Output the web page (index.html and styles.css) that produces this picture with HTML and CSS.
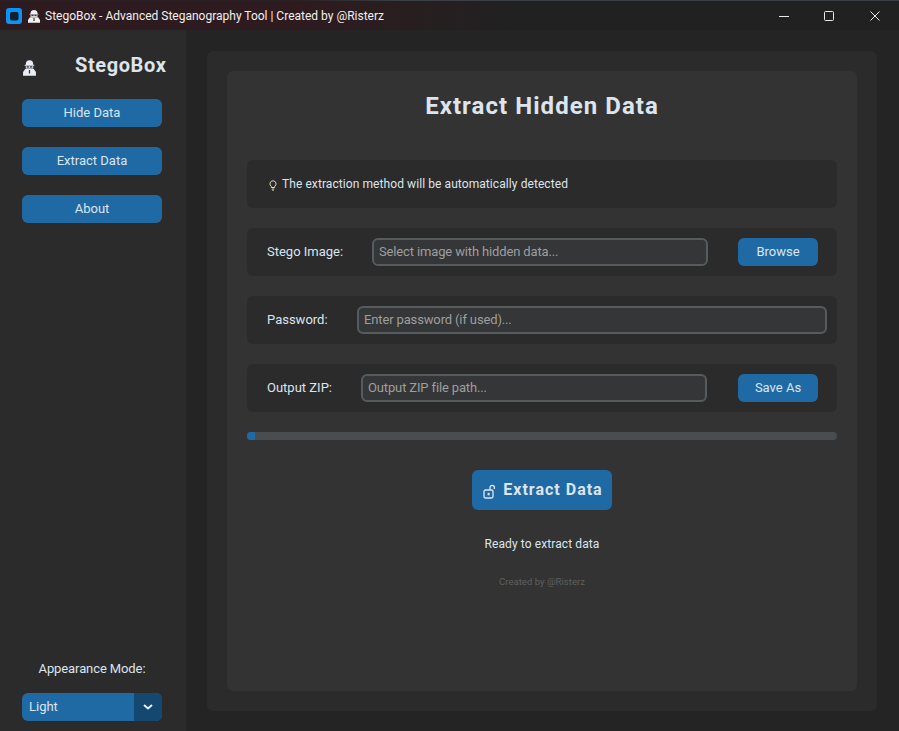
FILE: index.html
```html
<!DOCTYPE html>
<html lang="en">
<head>
<meta charset="utf-8">
<title>StegoBox</title>
<link rel="stylesheet" href="styles.css">
</head>
<body>
<div class="window">
  <header class="titlebar">
    <svg class="app-icon" width="16" height="16" viewBox="0 0 16 16"><rect width="16" height="16" rx="3" fill="#0b93f6"/><rect x="4" y="4" width="8.500" height="8.500" rx="2" fill="#10202c"/></svg>
    <svg class="spy" width="14" height="14" viewBox="0 0 14 14"><path d="M3.500 4.500Q3.500 1 7 1T10.500 4.500L12 5.500H2Z" fill="#eef0f2"/><path d="M3.500 5.800h7V8h-7z" fill="#d4d4d4"/><path d="M3 8.200h8l2 2.600v3H1v-3z" fill="#eef0f2"/><path d="M4.500 6h2v1h-2zM7.500 6h2v1h-2zM6.400 9h1.200v3H6.400z" fill="#3a3538"/></svg>
    <span class="title-text">StegoBox - Advanced Steganography Tool | Created by @Risterz</span>
    <div class="win-controls">
      <svg width="10" height="10" viewBox="0 0 10 10"><path d="M0 5.500h10" stroke="#e8e8e8" fill="none"/></svg>
      <svg width="11" height="10" viewBox="0 0 11 10"><rect x=".5" y=".5" width="9" height="9" rx="1" stroke="#e8e8e8" fill="none"/></svg>
      <svg width="10" height="10" viewBox="0 0 10 10"><path d="M.5.500l9 9M9.500.500l-9 9" stroke="#e8e8e8" fill="none"/></svg>
    </div>
  </header>
  <div class="app">
    <aside class="sidebar">
      <div class="brand">
        <svg class="spy-logo" width="15" height="17" viewBox="0 0 14 14" preserveAspectRatio="none"><path d="M3.500 4.500Q3.500 1 7 1T10.500 4.500L12 5.500H2Z" fill="#e8eef5"/><path d="M3.500 5.800h7V8h-7z" fill="#ccd4dc"/><path d="M3 8.200h8l2 2.600v3H1v-3z" fill="#e8eef5"/><path d="M4.500 6h2v1h-2zM7.500 6h2v1h-2zM6.400 9h1.200v3H6.400z" fill="#3a3538"/></svg>
        <span class="brand-name">StegoBox</span>
      </div>
      <nav class="nav">
        <button class="btn nav-btn">Hide Data</button>
        <button class="btn nav-btn">Extract Data</button>
        <button class="btn nav-btn">About</button>
      </nav>
      <div class="appearance">
        <div class="appearance-label">Appearance Mode:</div>
        <div class="select">
          <span class="select-value">Light</span>
          <span class="select-arrow"><svg width="10" height="6" viewBox="0 0 10 6"><path d="M1 1l4 3.500L9 1" stroke="#e6eef5" stroke-width="2" fill="none"/></svg></span>
        </div>
      </div>
    </aside>
    <main class="main">
      <div class="outer">
        <section class="card">
          <h1 class="heading">Extract Hidden Data</h1>
          <div class="row info">
            <svg class="bulb" width="8" height="11" viewBox="0 0 8 11"><path d="M4 .800a3 3 0 0 0-1.700 5.500V7.500h3.400V6.300A3 3 0 0 0 4 .800zM2.800 9h2.400M3.300 10.300h1.400" stroke="#e3d9b8" fill="none"/></svg>
            <span>The extraction method will be automatically detected</span>
          </div>
          <div class="row">
            <label class="label label-stego">Stego Image:</label>
            <div class="input input-stego">Select image with hidden data...</div>
            <button class="btn side-btn">Browse</button>
          </div>
          <div class="row">
            <label class="label label-pass">Password:</label>
            <div class="input input-pass">Enter password (if used)...</div>
          </div>
          <div class="row">
            <label class="label label-zip">Output ZIP:</label>
            <div class="input input-zip">Output ZIP file path...</div>
            <button class="btn side-btn">Save As</button>
          </div>
          <div class="progress"><div class="progress-fill"></div></div>
          <button class="btn extract">
            <svg width="14" height="15" viewBox="0 0 14 15"><rect x="1" y="6" width="9" height="8" rx="1.500" stroke="#dbe9f5" stroke-width="1.300" fill="none"/><path d="M7 6V3.500a2.200 2.200 0 0 1 4.400 0V5" stroke="#dbe9f5" stroke-width="1.300" fill="none"/><rect x="4.600" y="8.800" width="2" height="2.500" fill="#dbe9f5"/></svg>
            <span>Extract Data</span>
          </button>
          <p class="status">Ready to extract data</p>
          <p class="credit">Created by @Risterz</p>
        </section>
      </div>
    </main>
  </div>
</div>
</body>
</html>
```
FILE: styles.css
```css
* { box-sizing: border-box; }
html, body { margin: 0; height: 100%; }
body { background: #242424; font-family: Roboto, "Liberation Sans", sans-serif; color: #dce4ee; overflow: hidden; }
.window { width: 899px; height: 731px; display: flex; flex-direction: column; }

.titlebar { height: 30px; flex: none; background: linear-gradient(90deg, #2e1b1f 0, #2e1b1f 300px, #212121 520px); border-top: 1px solid; border-image: linear-gradient(90deg, #2a2024 0, #2a2024 300px, #3a4045 400px) 1; display: flex; align-items: center; padding-left: 6px; }
.app-icon { flex: none; margin-top: 0; }
.spy { flex: none; margin-left: 5px; }
.title-text { margin-left: 4px; font-family: Roboto, "Noto Sans", sans-serif; font-size: 12px; color: #f0f0f0; white-space: nowrap; }
.win-controls { margin-left: auto; display: flex; align-items: center; gap: 35px; padding-right: 19px; }
.win-controls svg { display: block; }

.app { flex: 1; display: flex; min-height: 0; }
.sidebar { width: 186px; flex: none; background: #2b2b2b; display: flex; flex-direction: column; padding: 0 24px 10px 22px; }
.brand { height: 69px; display: flex; align-items: center; position: relative; }
.spy-logo { margin-left: 0; margin-top: 6px; flex: none; }
.brand-name { position: absolute; left: 53px; top: 21px; font-size: 20px; font-weight: 700; line-height: 28px; letter-spacing: .6px; color: #dce4ee; white-space: nowrap; }
.nav { display: flex; flex-direction: column; gap: 20px; }

.btn { border: 0; background: #1f6aa5; color: #dce4ee; font-family: inherit; border-radius: 6px; padding: 0 0 2px; display: flex; align-items: center; justify-content: center; }
.nav-btn { width: 140px; height: 28px; font-size: 13px; }

.appearance { margin-top: auto; }
.appearance-label { text-align: center; font-size: 13px; letter-spacing: -.1px; line-height: 16px; margin-bottom: 16px; }
.select { width: 140px; height: 28px; border-radius: 6px; overflow: hidden; display: flex; background: #1f6aa5; }
.select-value { flex: 1; padding-left: 7px; font-size: 13px; line-height: 27px; }
.select-arrow { width: 28px; background: #144870; display: flex; align-items: center; justify-content: center; }

.main { flex: 1; min-width: 0; padding: 21px 22px 20px 21px; }
.outer { height: 100%; background: #2b2b2b; border-radius: 6px; padding: 20px; }
.card { height: 100%; background: #333333; border-radius: 6px; padding: 20px; display: flex; flex-direction: column; }
.heading { margin: -1px 0 1px; text-align: center; font-size: 24px; font-weight: 700; line-height: 32px; letter-spacing: 1.05px; height: 69px; }

.row { height: 48px; flex: none; background: #2b2b2b; border-radius: 6px; margin-bottom: 20px; display: flex; align-items: center; padding: 0 20px; font-size: 13px; }
.info { padding-left: 22px; font-size: 12px; letter-spacing: .08px; }
.bulb { margin-right: 5px; margin-top: 2px; flex: none; }
.label { flex: none; white-space: nowrap; padding-bottom: 2px; }
.label-stego { width: 105px; }
.label-pass { width: 90px; }
.label-zip { width: 94px; }
.input { height: 28px; border: 2px solid #565b5e; border-radius: 6px; background: #343638; color: #9e9e9e; font-size: 13px; letter-spacing: -.14px; line-height: 24px; padding-left: 5px; white-space: nowrap; }
.input-stego { width: 336px; }
.input-pass { width: 470px; margin-right: -10px; }
.input-zip { width: 346px; }
.side-btn { width: 80px; height: 28px; font-size: 13px; margin-left: auto; margin-right: -1px; }

.progress { height: 8px; flex: none; background: #4a4d50; border-radius: 4px; overflow: hidden; margin-bottom: 30px; }
.progress-fill { width: 8px; height: 100%; background: #1f6aa5; }
.extract { width: 140px; height: 40px; flex: none; align-self: center; gap: 6px; padding-left: 2px; font-size: 16px; font-weight: 700; letter-spacing: 1px; }
.extract svg { margin-top: 4px; }
.status { margin: 26px 0 0; text-align: center; font-size: 12px; letter-spacing: .1px; line-height: 16px; }
.credit { margin: 24px 0 0; text-align: center; font-size: 9.600px; line-height: 12px; color: #5f5f5f; }
```
